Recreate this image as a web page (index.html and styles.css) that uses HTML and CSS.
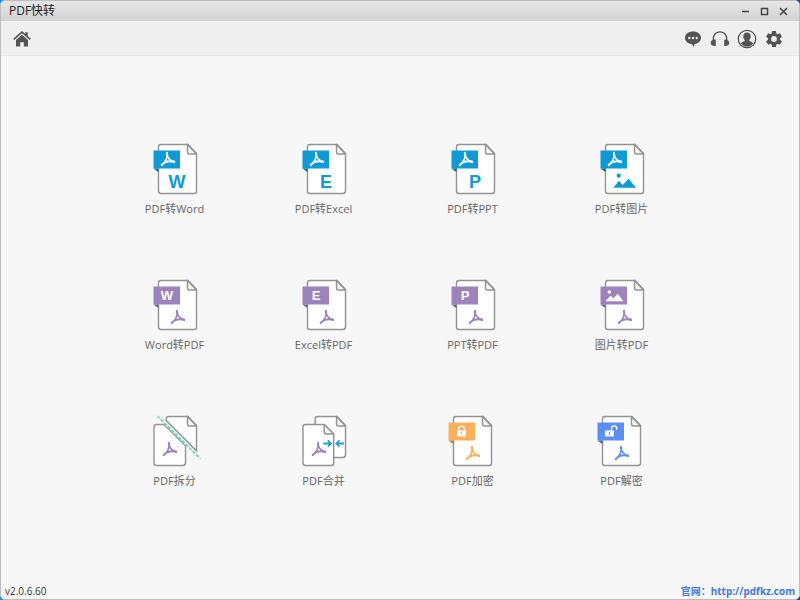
FILE: index.html
```html
<!DOCTYPE html>
<html lang="zh-CN">
<head>
<meta charset="utf-8">
<meta name="viewport" content="width=device-width, initial-scale=1">
<title>PDF快转</title>
<link rel="stylesheet" href="styles.css">
</head>
<body>
<svg class="defs" width="0" height="0" aria-hidden="true">
  <symbol id="page" viewBox="0 0 59 54">
    <path class="sheet" d="M16 2.500h27l8.500 9V49a2.500 2.500 0 0 1-2.500 2.500H16a2.500 2.500 0 0 1-2.500-2.500V5A2.500 2.500 0 0 1 16 2.500z"/>
    <path class="fold" d="M42.500 2.500V10a2 2 0 0 0 2 2h7z"/>
  </symbol>
  <symbol id="badge" viewBox="0 0 59 54">
    <path d="M8.500 26.500h5v3.500z" fill="currentColor"/>
    <path class="shade" d="M8.500 26.500h5v3.500z"/>
    <path d="M8.500 8.500h26.500v18h-26.500z" fill="currentColor"/>
  </symbol>
  <symbol id="acrobat" viewBox="0 0 16 16">
    <path class="stroke" d="M6.700 2C8 6 5.500 11 1.800 14.200M7.100 1.700C6.700 6 10 10.500 14.300 10.500M1.600 13.800C5 10.500 10 9.500 14.300 11.200"/>
  </symbol>
  <symbol id="lock-body" viewBox="0 0 12 12">
    <path fill="#fff" fill-rule="evenodd" d="M1.500 5h9v6h-9zM5.500 6.500v3h1v-3z"/>
  </symbol>
</svg>

<div class="window">
  <header class="titlebar">
    <h1 class="title">PDF快转</h1>
    <div class="controls">
      <button class="control" type="button" aria-label="最小化"><svg width="9" height="9" viewBox="0 0 9 9"><path d="M1 4.500h7"/></svg></button>
      <button class="control" type="button" aria-label="最大化"><svg width="9" height="9" viewBox="0 0 9 9"><path d="M1.500 1.500h6v6h-6z"/></svg></button>
      <button class="control" type="button" aria-label="关闭"><svg width="9" height="9" viewBox="0 0 9 9"><path d="M1 1l7 7M8 1L1 8"/></svg></button>
    </div>
  </header>

  <nav class="toolbar">
    <button class="tool" type="button" aria-label="首页">
      <svg width="20" height="20" viewBox="0 0 20 20"><path fill="currentColor" d="M10 5.800l6 5.200v6.500h-4.200v-4.300H8.200v4.300H4V11z"/><path fill="currentColor" d="M13.300 3.200h2.400v4.300l-2.400-2z"/><path fill="none" stroke="currentColor" stroke-width="1.700" d="M1.700 10.300L10 3.100l8.300 7.200"/></svg>
    </button>
    <div class="tools">
      <button class="tool" type="button" aria-label="消息">
        <svg width="20" height="20" viewBox="0 0 20 20"><path fill="currentColor" d="M10 2.500c4.600 0 8 2.700 8 6.300 0 3.300-2.800 5.800-6.600 6.200l-.4 2.700-2.600-2.700C4.700 14.600 2 12.100 2 8.800c0-3.600 3.400-6.300 8-6.300z"/><g fill="#efefef"><circle cx="6.300" cy="9" r="1.200"/><circle cx="10" cy="9" r="1.200"/><circle cx="13.700" cy="9" r="1.200"/></g></svg>
      </button>
      <button class="tool" type="button" aria-label="客服">
        <svg width="20" height="20" viewBox="0 0 20 20"><path fill="none" stroke="currentColor" stroke-width="1.300" d="M3.300 12V9.500a6.700 6.700 0 0 1 13.400 0V12"/><path fill="currentColor" d="M4 10.500h1.800V17H4.500C2 17 .700 15.600.700 14c0-1.700 1.300-3 3.300-3.500zM16 10.500h-1.800V17h1.300c2.500 0 3.800-1.400 3.800-3 0-1.700-1.300-3-3.300-3.500z"/></svg>
      </button>
      <button class="tool" type="button" aria-label="用户">
        <svg width="20" height="20" viewBox="0 0 20 20"><circle cx="10" cy="10" r="8.700" fill="none" stroke="currentColor" stroke-width="1.300"/><path fill="currentColor" d="M10 3.500c2.300 0 3.700 1.600 3.700 3.800 0 1.600-.6 2.800-1.400 3.600v1.200c1.800.5 3.300 1.200 3.700 2.400A7.500 7.500 0 0 1 10 17.600a7.500 7.500 0 0 1-6-3.100c.4-1.200 1.900-1.900 3.700-2.400v-1.200C6.900 10.100 6.300 8.900 6.300 7.300c0-2.200 1.400-3.800 3.700-3.800z"/></svg>
      </button>
      <button class="tool" type="button" aria-label="设置">
        <svg width="20" height="20" viewBox="0 0 20 20"><g fill="currentColor"><path id="tooth" d="M8 2h4l.5 4h-5zM8 18h4l.5-4h-5z"/><use href="#tooth" transform="rotate(60 10 10)"/><use href="#tooth" transform="rotate(120 10 10)"/></g><circle cx="10" cy="10" r="4.500" fill="none" stroke="currentColor" stroke-width="3.200"/></svg>
      </button>
    </div>
  </nav>

  <main class="grid">
    <button class="tile blue" type="button">
      <svg class="icon" viewBox="0 0 59 54"><use href="#page"/><use href="#badge"/><use class="light" href="#acrobat" x="15" y="9" width="16" height="16"/><text class="letter" x="32" y="46">W</text></svg>
      <span>PDF转Word</span>
    </button>
    <button class="tile blue" type="button">
      <svg class="icon" viewBox="0 0 59 54"><use href="#page"/><use href="#badge"/><use class="light" href="#acrobat" x="15" y="9" width="16" height="16"/><text class="letter" x="32" y="46">E</text></svg>
      <span>PDF转Excel</span>
    </button>
    <button class="tile blue" type="button">
      <svg class="icon" viewBox="0 0 59 54"><use href="#page"/><use href="#badge"/><use class="light" href="#acrobat" x="15" y="9" width="16" height="16"/><text class="letter" x="32" y="46">P</text></svg>
      <span>PDF转PPT</span>
    </button>
    <button class="tile blue" type="button">
      <svg class="icon" viewBox="0 0 59 54"><use href="#page"/><use href="#badge"/><use class="light" href="#acrobat" x="15" y="9" width="16" height="16"/><g fill="currentColor"><circle cx="26.700" cy="33.700" r="2.100"/><path d="M21.300 45.700l5.700-7 3.700 4.300 6-6.300 7.300 9z"/></g></svg>
      <span>PDF转图片</span>
    </button>

    <button class="tile purple" type="button">
      <svg class="icon" viewBox="0 0 59 54"><use href="#page"/><use href="#badge"/><text class="letter small" x="22" y="22">W</text><use href="#acrobat" x="25" y="31" width="16" height="16"/></svg>
      <span>Word转PDF</span>
    </button>
    <button class="tile purple" type="button">
      <svg class="icon" viewBox="0 0 59 54"><use href="#page"/><use href="#badge"/><text class="letter small" x="22" y="22">E</text><use href="#acrobat" x="25" y="31" width="16" height="16"/></svg>
      <span>Excel转PDF</span>
    </button>
    <button class="tile purple" type="button">
      <svg class="icon" viewBox="0 0 59 54"><use href="#page"/><use href="#badge"/><text class="letter small" x="22" y="22">P</text><use href="#acrobat" x="25" y="31" width="16" height="16"/></svg>
      <span>PPT转PDF</span>
    </button>
    <button class="tile purple" type="button">
      <svg class="icon" viewBox="0 0 59 54"><use href="#page"/><use href="#badge"/><g fill="#fff"><circle cx="17.300" cy="14" r="1.800"/><path d="M13.300 23.300l5.200-5.600 3 2.600 4.300-4.600 5.500 7.600z"/></g><use href="#acrobat" x="25" y="31" width="16" height="16"/></svg>
      <span>图片转PDF</span>
    </button>

    <button class="tile purple" type="button">
      <svg class="icon" viewBox="0 0 59 54">
        <path class="sheet" d="M19 10.500h-7.500A2.500 2.500 0 0 0 9 13v36a2.500 2.500 0 0 0 2.500 2.500H38a2.500 2.500 0 0 0 2.500-2.500V32z"/>
        <path class="sheet" d="M21.200 6.500V5a2.500 2.500 0 0 1 2.500-2.500H43l8.500 9v25.300z"/>
        <path class="fold" d="M42.500 2.500V10a2 2 0 0 0 2 2h7z"/>
        <path class="cut-band" d="M15 3.700L54 42.700"/>
        <path class="cut" d="M12.500 2L55.500 45"/>
        <use href="#acrobat" x="17" y="27" width="16" height="16"/>
      </svg>
      <span>PDF拆分</span>
    </button>
    <button class="tile purple" type="button">
      <svg class="icon" viewBox="0 0 59 54">
        <path class="sheet" d="M23.700 2.500H43l8.500 9V41a2.500 2.500 0 0 1-2.500 2.500H21.200V5a2.500 2.500 0 0 1 2.500-2.500z"/>
        <path class="fold" d="M42.500 2.500V10a2 2 0 0 0 2 2h7z"/>
        <path class="sheet" d="M11.500 10.500h18.700l9.500 9.500v29a2.500 2.500 0 0 1-2.500 2.500H11.500A2.500 2.500 0 0 1 9 49V13a2.500 2.500 0 0 1 2.500-2.500z"/>
        <path class="fold" d="M30.200 10.500v7a2.500 2.500 0 0 0 2.500 2.500h7z"/>
        <path class="arrow" d="M29.300 29.500h7.500M33.800 26.300l3.200 3.200-3.200 3.200M50 29.500h-7.500M45.500 26.300l-3.200 3.200 3.200 3.200"/>
        <use href="#acrobat" x="17" y="27" width="16" height="16"/>
      </svg>
      <span>PDF合并</span>
    </button>
    <button class="tile orange" type="button">
      <svg class="icon" viewBox="3 0 59 54"><use href="#page" width="59" height="54"/><use href="#badge" width="59" height="54"/><use href="#lock-body" x="15.500" y="11.500" width="12" height="12"/><path class="shackle" d="M18.700 17v-2a2.800 2.800 0 0 1 5.600 0v2"/><use href="#acrobat" x="25" y="31" width="16" height="16"/></svg>
      <span>PDF加密</span>
    </button>
    <button class="tile azure" type="button">
      <svg class="icon" viewBox="3 0 59 54"><use href="#page" width="59" height="54"/><use href="#badge" width="59" height="54"/><use href="#lock-body" x="14.500" y="11.500" width="12" height="12"/><path class="shackle" d="M22.500 17v-2.500a2.600 2.600 0 0 1 5.200 0v1.500"/><use href="#acrobat" x="25" y="31" width="16" height="16"/></svg>
      <span>PDF解密</span>
    </button>
  </main>

  <footer class="statusbar">
    <span>v2.0.6.60</span>
    <a class="site" href="http://pdfkz.com">官网：http://pdfkz.com</a>
  </footer>
</div>
</body>
</html>
```
FILE: styles.css
```css
* {
  box-sizing: border-box;
}

body {
  margin: 0;
  background: linear-gradient(to right, #1e8be0, #1245a8);
  font-family: "Open Sans", "Noto Sans CJK SC", sans-serif;
  font-size: 11px;
  color: #333;
}

button {
  margin: 0;
  padding: 0;
  border: 0;
  background: none;
  font: inherit;
  color: inherit;
  cursor: pointer;
}

.defs {
  position: absolute;
}

.window {
  display: flex;
  flex-direction: column;
  min-height: 100vh;
  border: 1px solid #bdbdbd;
  border-radius: 5px;
  background: #f7f7f7;
  overflow: hidden;
}

.titlebar {
  display: flex;
  align-items: center;
  justify-content: space-between;
  height: 20px;
  padding: 0 6px 0 8px;
  background: linear-gradient(#e6e6e6, #d2d2d2);
}

.title {
  margin: 0;
  font-size: 12px;
  font-weight: 400;
  line-height: 20px;
  color: #222;
}

.controls {
  display: flex;
}

.control {
  display: grid;
  place-items: center;
  width: 19px;
  height: 20px;
}

.control path {
  fill: none;
  stroke: #444;
  stroke-width: 1.5;
}

.toolbar {
  display: flex;
  align-items: center;
  justify-content: space-between;
  height: 35px;
  padding: 1px 15px 0 11px;
  border-bottom: 1px solid #e4e4e4;
  background: #efefef;
  color: #545454;
}

.tools {
  display: flex;
  gap: 7px;
}

.tool,
.tool svg {
  display: block;
  width: 20px;
  height: 20px;
}

.grid {
  flex: 1;
  display: grid;
  grid-template-columns: repeat(4, 1fr);
  grid-auto-rows: 76px;
  align-content: start;
  row-gap: 60px;
  padding: 86px 103px 0 99px;
}

.tile {
  display: flex;
  flex-direction: column;
  align-items: center;
  gap: 4px;
  line-height: 18px;
  white-space: nowrap;
}

.tile span {
  color: #666;
}

.icon {
  width: 59px;
  height: 54px;
}

.blue { color: #0d9ad7; }
.purple { color: #9e82bb; }
.orange { color: #fbb159; }
.azure { color: #5b8ff5; }

.sheet {
  fill: #fff;
  stroke: #929292;
  stroke-width: 1.4;
}

.fold {
  fill: #f5f5f5;
  stroke: #929292;
  stroke-width: 1.4;
  stroke-linejoin: round;
}

.shade {
  fill: #000;
  opacity: 0.3;
}

.stroke {
  fill: none;
  stroke: currentColor;
  stroke-width: 1.8;
  stroke-linecap: round;
}

.light {
  color: #fff;
}

.letter {
  fill: currentColor;
  font-family: "Liberation Sans", sans-serif;
  font-size: 18px;
  font-weight: 700;
  text-anchor: middle;
}

.letter.small {
  fill: #fff;
  font-size: 13px;
}

.cut-band {
  stroke: #d4f0ec;
  stroke-width: 3;
}

.cut {
  stroke: #5cc4bc;
  stroke-width: 1.2;
  stroke-dasharray: 3 2;
}

.arrow {
  fill: none;
  stroke: #1ba3d0;
  stroke-width: 1.8;
}

.shackle {
  fill: none;
  stroke: #fff;
  stroke-width: 1.3;
}

.statusbar {
  display: flex;
  align-items: center;
  justify-content: space-between;
  height: 16px;
  padding: 0 4px;
  font-size: 10px;
  line-height: 16px;
}

.site {
  font-weight: 700;
  color: #4179dc;
  text-decoration: none;
}
```
